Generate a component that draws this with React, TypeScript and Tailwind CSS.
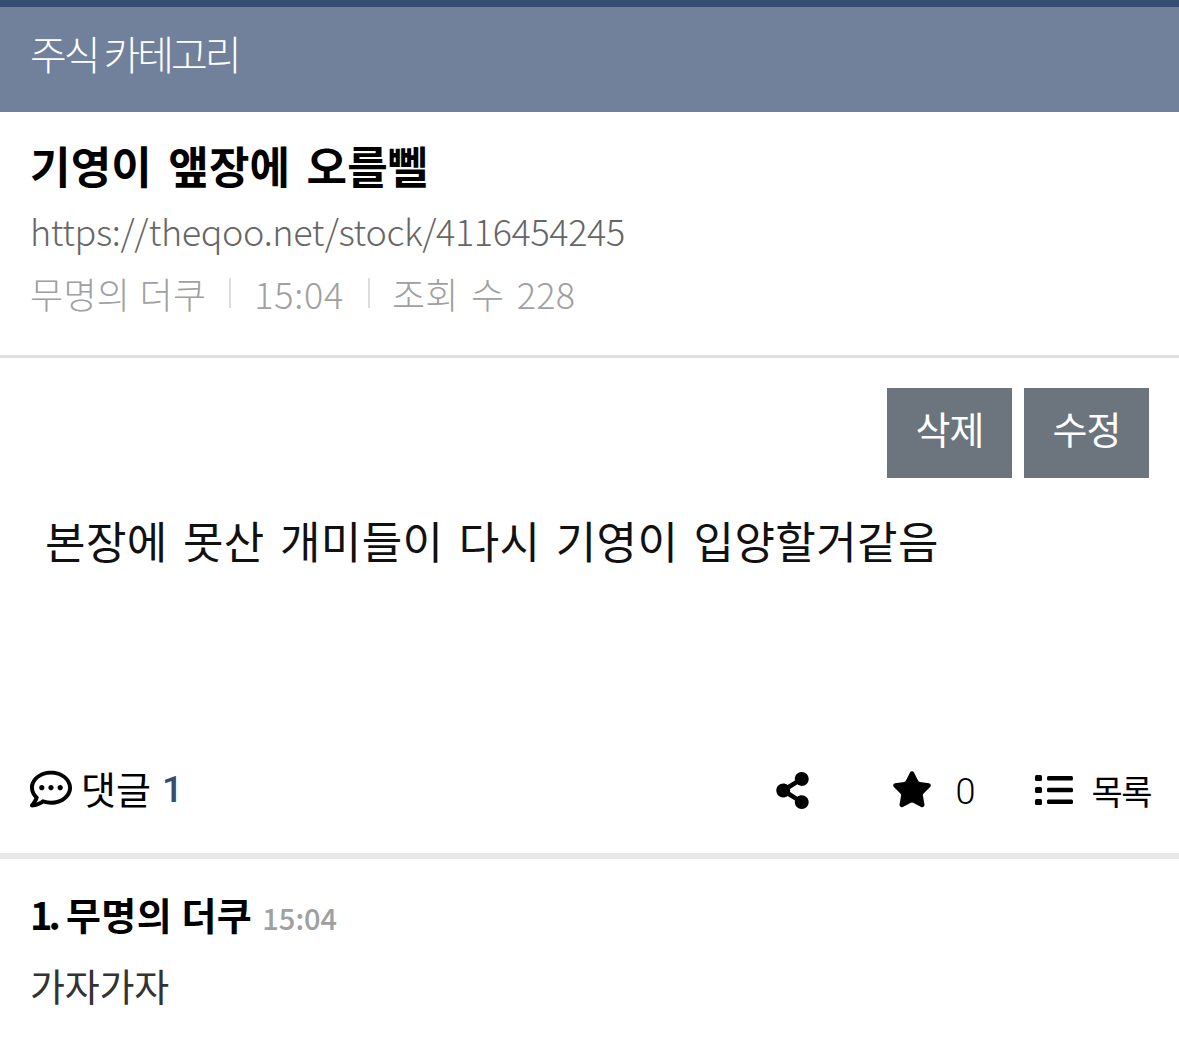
import { Star } from "lucide-react";

const KR = "font-['Noto_Sans_CJK_KR','Noto_Sans',sans-serif]";

function CommentIcon() {
  return (
    <svg viewBox="0 0 512 512" className="w-[42px] h-[42px]" fill="currentColor">
      <path d="M144 208c-17.700 0-32 14.300-32 32s14.300 32 32 32 32-14.300 32-32-14.300-32-32-32zm112 0c-17.700 0-32 14.300-32 32s14.300 32 32 32 32-14.300 32-32-14.300-32-32-32zm112 0c-17.700 0-32 14.300-32 32s14.300 32 32 32 32-14.300 32-32-14.300-32-32-32zM256 32C114.600 32 0 125.100 0 240c0 47.600 19.900 91.200 52.900 126.300C38 405.700 7 439.100 6.500 439.500c-6.600 7-8.400 17.200-4.600 26S14.400 480 24 480c61.500 0 110-25.700 139.100-46.300C192 442.800 223.200 448 256 448c141.400 0 256-93.100 256-208S397.400 32 256 32zm0 368c-26.700 0-53.100-4.100-78.400-12.100l-22.700-7.200-19.500 13.800c-14.300 10.100-33.900 21.400-57.500 29 7.300-12.100 14.400-25.700 19.900-40.200l10.600-28.100-20.600-21.800C69.700 314.100 48 282.200 48 240c0-88.200 93.300-160 208-160s208 71.800 208 160-93.300 160-208 160z" />
    </svg>
  );
}

function ShareIcon() {
  return (
    <svg viewBox="0 0 448 512" className="w-[35px] h-[37px]" fill="currentColor">
      <path d="M352 320c-22.600 0-43.400 7.800-59.800 20.900l-102.500-64.100a96.600 96.600 0 0 0 0-41.700l102.500-64.100C308.600 184.200 329.400 192 352 192c53 0 96-43 96-96S405 0 352 0s-96 43-96 96c0 7.200.8 14.100 2.300 20.800L155.800 180.900C139.400 167.800 118.600 160 96 160c-53 0-96 43-96 96s43 96 96 96c22.600 0 43.400-7.800 59.800-20.900l102.500 64.100A96.300 96.300 0 0 0 256 416c0 53 43 96 96 96s96-43 96-96-43-96-96-96z" />
    </svg>
  );
}

function ListIcon() {
  return (
    <svg viewBox="0 0 38 30" className="w-[38px] h-[30px]" fill="currentColor">
      <rect x="0" y="0" width="7" height="6" rx="1.5" />
      <rect x="0" y="12" width="7" height="6" rx="1.5" />
      <rect x="0" y="24" width="7" height="6" rx="1.5" />
      <rect x="12" y="1" width="26" height="4.500" rx="1.500" />
      <rect x="12" y="12.800" width="26" height="4.500" rx="1.500" />
      <rect x="12" y="24.500" width="26" height="4.500" rx="1.500" />
    </svg>
  );
}

export default function App() {
  return (
    <div className={`w-[1179px] h-[1039px] overflow-hidden bg-white ${KR}`}>
      <header className="h-[112px] border-t-[7px] border-[#344e73] bg-[#71819b] px-[30px] flex items-center">
        <h2 className="text-[40px] leading-none tracking-[-3px] font-light text-white pb-[14px]">주식 카테고리</h2>
      </header>

      <section className="h-[246px] border-b-[3px] border-[#dfdfdf] px-[30px] pt-[27px]">
        <h1 className="text-[44px] leading-[52px] tracking-[0.2px] [word-spacing:6px] font-bold text-black">기영이 앺장에 오를뻴</h1>
        <p className="mt-[17px] text-[36px] leading-[44px] tracking-[-0.39px] font-light text-[#666666]">https://theqoo.net/stock/4116454245</p>
        <div className="mt-[19px] flex items-center text-[36px] leading-[44px] tracking-[0.3px] [word-spacing:4px] font-light text-[#a0a0a0]">
          <span className="[word-spacing:1px]">무명의 더쿠</span>
          <span className="ml-[23px] mr-[23px] h-[30px] w-[2px] bg-[#dddddd]" />
          <span className="tracking-[0.7px]">15:04</span>
          <span className="ml-[24px] mr-[22px] h-[30px] w-[2px] bg-[#dddddd]" />
          <span>조회 수 228</span>
        </div>
      </section>

      <div className="flex justify-end gap-[12px] pt-[30px] pr-[30px]">
        <button className="w-[125px] h-[90px] bg-[#6c757d] text-white text-[38px] tracking-[-1px] pb-[12px]">삭제</button>
        <button className="w-[125px] h-[90px] bg-[#6c757d] text-white text-[38px] tracking-[-1px] pb-[12px]">수정</button>
      </div>

      <div className="h-[250px] pl-[45px] pt-[30px] text-[44px] leading-[64px] tracking-[0.4px] [word-spacing:5px] text-[#111111]">
        본장에 못산 개미들이 다시 기영이 입양할거같음
      </div>

      <div className="h-[131px] border-b-[6px] border-[#e9e9e9] px-[30px] flex items-center pb-[7px] text-black">
        <span className="mt-[4px]"><CommentIcon /></span>
        <span className="ml-[9px] text-[38px]">댓글</span>
        <span className="ml-[11px] mt-[6px] text-[37px] font-['Roboto',sans-serif] font-medium text-[#344e73]">1</span>
        <div className="ml-auto mr-[-2px] mt-[6px] flex items-center">
          <ShareIcon />
          <Star className="ml-[81px] w-[42px] h-[42px]" fill="currentColor" strokeWidth={1.5} />
          <span className="ml-[22px] mt-[4px] text-[36px] font-['Roboto',sans-serif] font-light">0</span>
          <span className="ml-[60px]"><ListIcon /></span>
          <span className="ml-[18px] text-[34px] tracking-[-1.5px]">목록</span>
        </div>
      </div>

      <div className="px-[30px] pt-[28px]">
        <div className="flex items-baseline">
          <span className="text-[38px] leading-[54px] tracking-[0.5px] font-bold text-black">
            <span className="tracking-[-4px]">1.</span> 무명의 더쿠
          </span>
          <span className="ml-[10px] text-[29px] font-medium text-[#a0a0a0]">15:04</span>
        </div>
        <p className="mt-[17px] text-[38px] leading-[54px] tracking-[-0.25px] text-[#333333]">가자가자</p>
      </div>
    </div>
  );
}
